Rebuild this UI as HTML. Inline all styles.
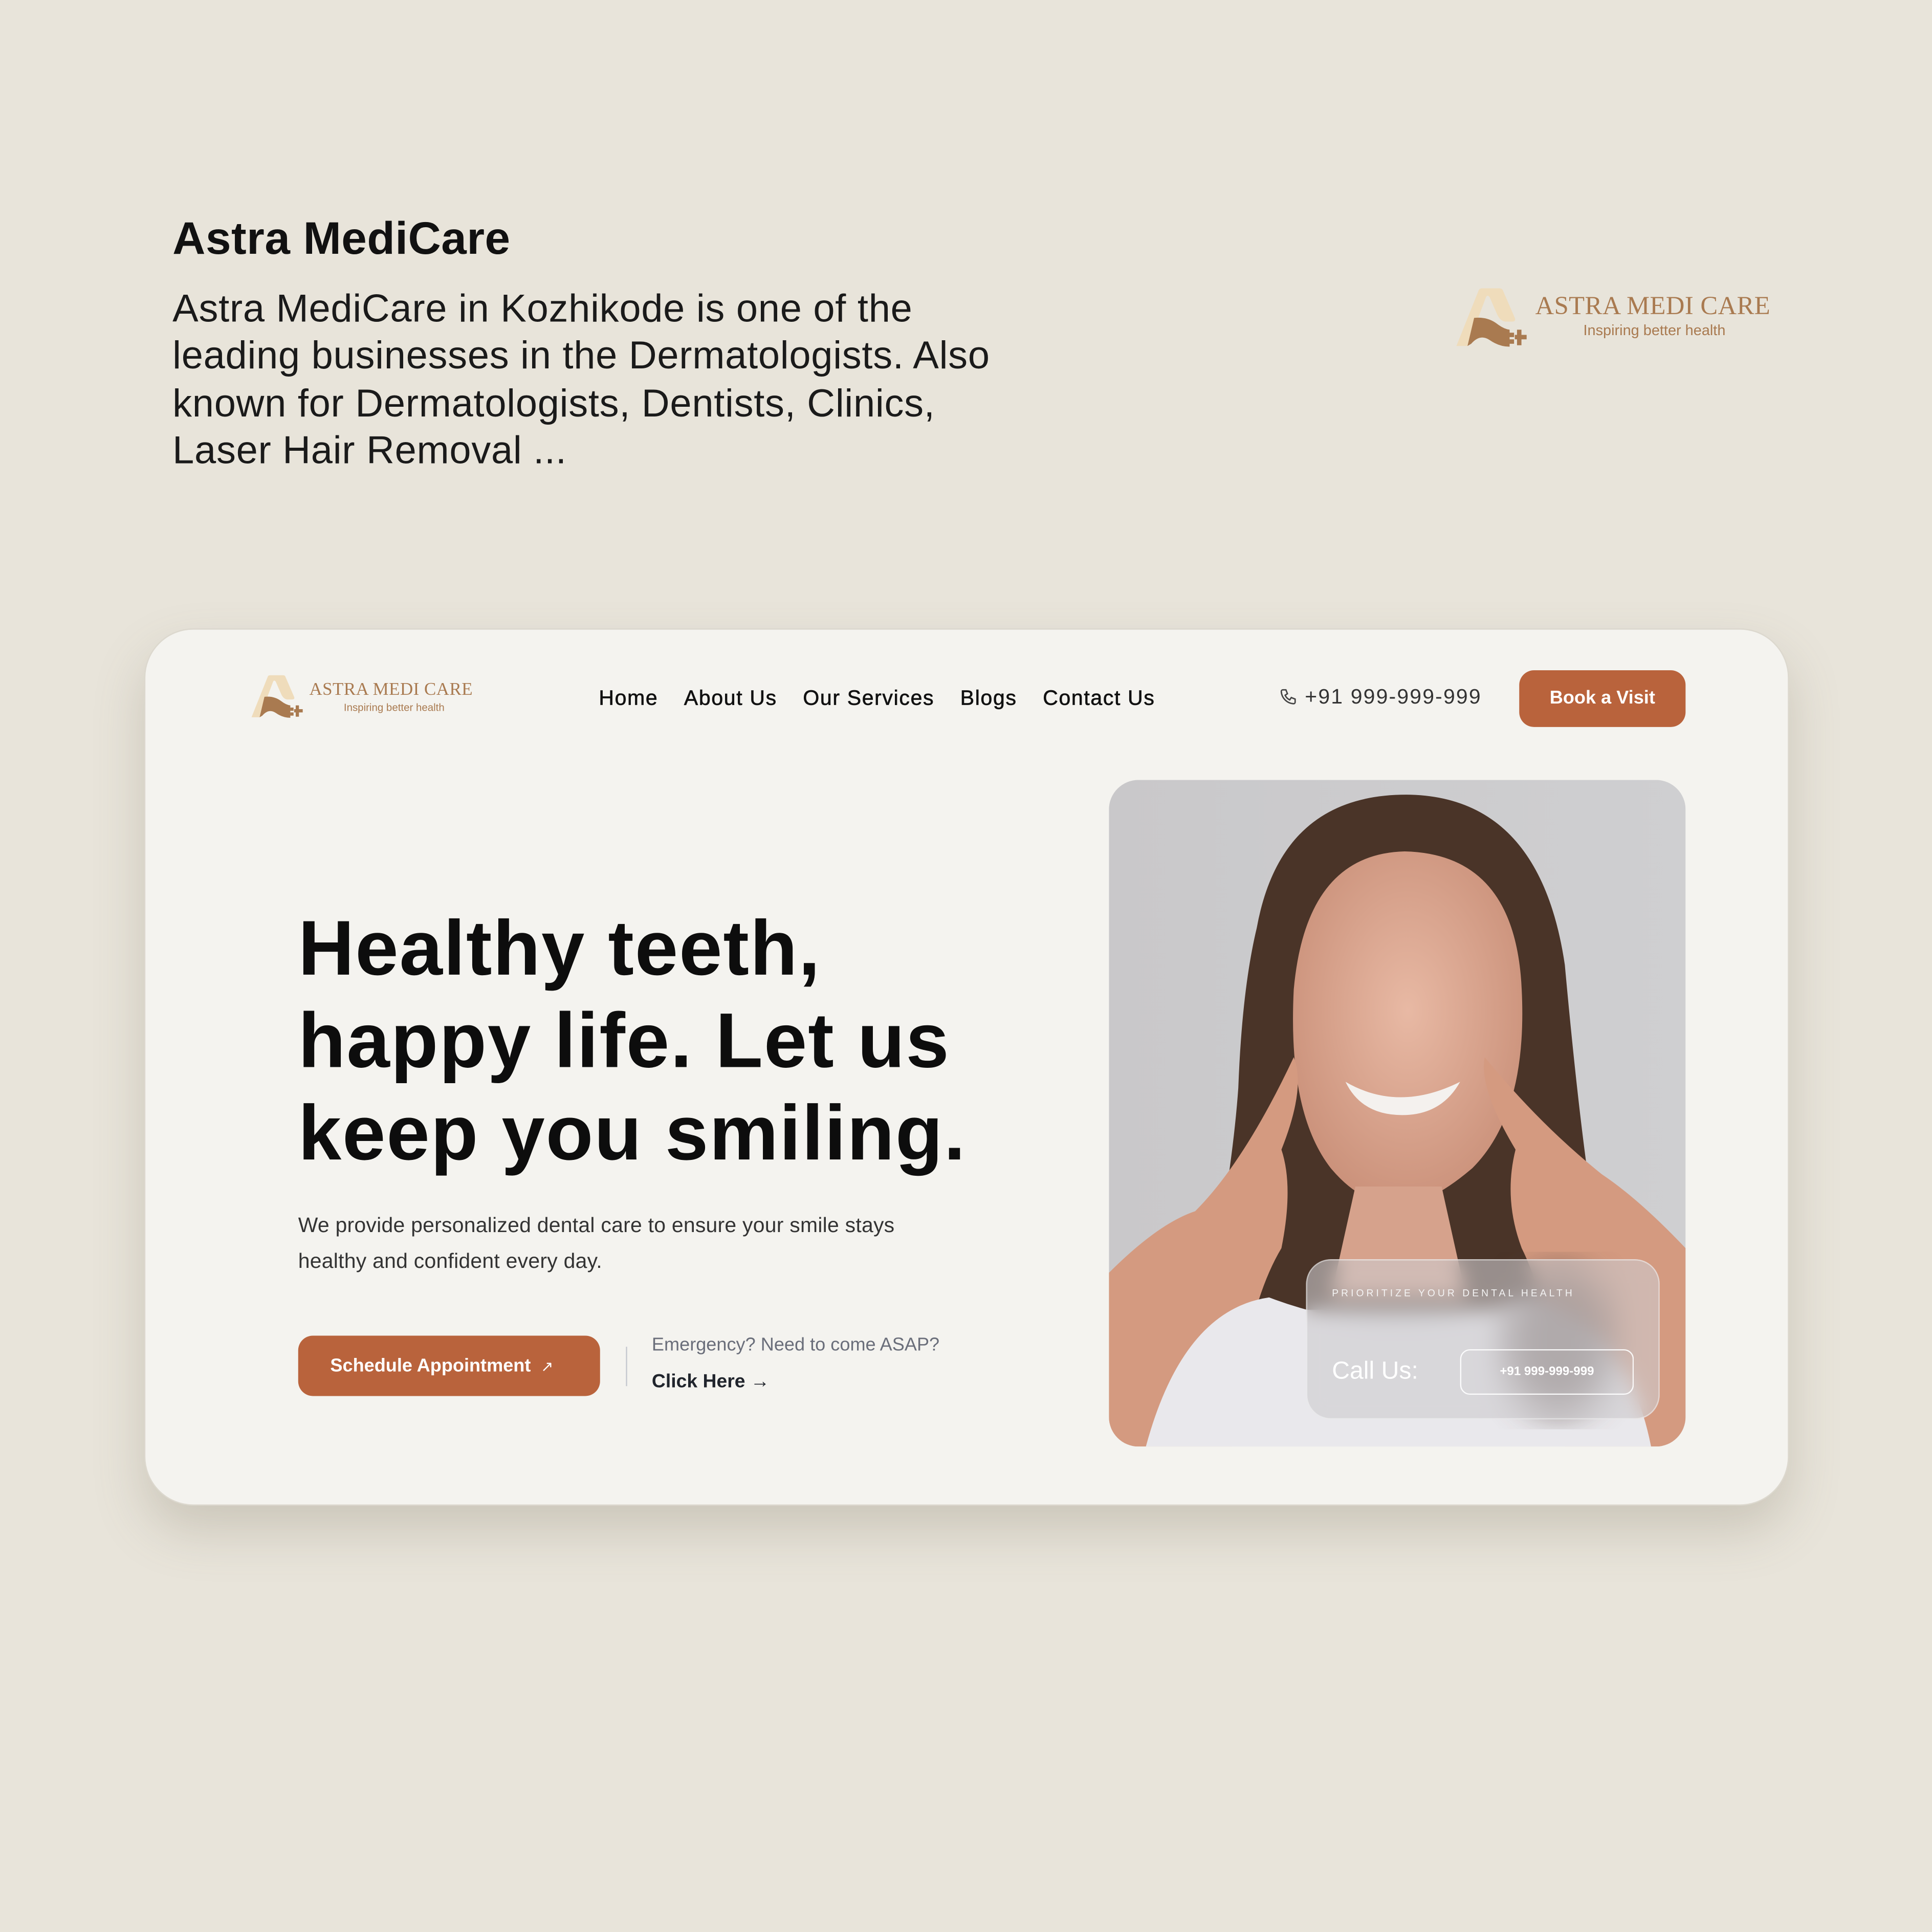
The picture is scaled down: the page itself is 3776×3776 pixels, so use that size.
<!DOCTYPE html>
<html><head><meta charset="utf-8">
<style>
*{margin:0;padding:0;box-sizing:border-box}
html,body{width:3776px;height:3776px;overflow:hidden;background:#e8e4da}
#s{position:absolute;left:0;top:0;width:1568px;height:1568px;transform:scale(2.408163);transform-origin:0 0;font-family:"Liberation Sans",sans-serif;color:#111}
.a{position:absolute}
.lt{font-family:"Liberation Serif",serif;color:#a97a50;letter-spacing:0.2px}
.nav span{margin-right:21px}
</style></head><body>
<div id="s">
<div class="a" style="left:140px;top:173px;font-size:37px;font-weight:bold;letter-spacing:0.2px">Astra MediCare</div>
<div class="a" style="left:140px;top:231px;font-size:31.5px;line-height:38.3px;width:700px;color:#1a1a1a;letter-spacing:0.3px">Astra MediCare in Kozhikode is one of the leading businesses in the Dermatologists. Also known for Dermatologists, Dentists, Clinics, Laser Hair Removal ...</div>

<svg class="a" style="left:1180px;top:234px" width="64" height="48" viewBox="0 0 100 80">
<path d="M0,78 L30,3 Q31,0 35,0 L58,0 Q62,0 63,3 L79,40 Q81,45 75,45 L66,45 Q59,44 55,35 L45,12 Q42,8 40,12 L22,60 L15,78 Z" fill="#efdcbb"/>
<path d="M24,40 Q42,38 55,48 Q64,55 72,56 L72,79 Q58,79 45,70 Q32,61 20,75 L15,78 Z" fill="#a97a50"/>
<rect x="72" y="60" width="6" height="6" fill="#a97a50"/><rect x="72" y="69" width="6" height="6" fill="#a97a50"/>
<path d="M82,56h6v7h7v6h-7v8h-6v-8h-3v-6h3z" fill="#a97a50"/>
</svg>
<div class="a lt" style="left:1246px;top:236px;font-size:21px">ASTRA MEDI CARE</div>
<div class="a" style="left:1285px;top:261px;font-size:12px;color:#a97a50">Inspiring better health</div>

<div class="a" style="left:117px;top:510px;width:1335px;height:712px;border-radius:40px;background:#f4f3ef;box-shadow:0 20px 40px rgba(120,110,90,0.25);border:1px solid #dcd8ce"></div>

<svg class="a" style="left:203px;top:548px" width="46" height="35" viewBox="0 0 100 80">
<path d="M0,78 L30,3 Q31,0 35,0 L58,0 Q62,0 63,3 L79,40 Q81,45 75,45 L66,45 Q59,44 55,35 L45,12 Q42,8 40,12 L22,60 L15,78 Z" fill="#efdcbb"/>
<path d="M24,40 Q42,38 55,48 Q64,55 72,56 L72,79 Q58,79 45,70 Q32,61 20,75 L15,78 Z" fill="#a97a50"/>
<rect x="72" y="60" width="6" height="6" fill="#a97a50"/><rect x="72" y="69" width="6" height="6" fill="#a97a50"/>
<path d="M82,56h6v7h7v6h-7v8h-6v-8h-3v-6h3z" fill="#a97a50"/>
</svg>
<div class="a lt" style="left:251px;top:552px;font-size:14.5px">ASTRA MEDI CARE</div>
<div class="a" style="left:279px;top:569px;font-size:8.5px;color:#a97a50">Inspiring better health</div>

<div class="a nav" style="left:486px;top:557px;font-size:17px;letter-spacing:0.7px;white-space:nowrap;-webkit-text-stroke:0.3px #111"><span>Home</span><span>About Us</span><span>Our Services</span><span>Blogs</span><span>Contact Us</span></div>
<svg class="a" style="left:1038px;top:558px" width="15" height="15" viewBox="0 0 24 24"><path d="M5 3h4l2 5-3 2a12 12 0 0 0 6 6l2-3 5 2v4a2 2 0 0 1-2 2A17 17 0 0 1 3 5a2 2 0 0 1 2-2z" fill="none" stroke="#444" stroke-width="1.8"/></svg>
<div class="a" style="left:1059px;top:556px;font-size:17px;color:#333;letter-spacing:0.9px">+91 999-999-999</div>
<div class="a" style="left:1233px;top:544px;width:135px;height:46px;border-radius:12px;background:#b9633c;color:#fff;font-size:15px;font-weight:bold;text-align:center;line-height:46px">Book a Visit</div>

<div class="a" style="left:242px;top:733px;font-size:63px;line-height:75px;font-weight:bold;letter-spacing:0.8px;color:#0d0d0d;white-space:nowrap">Healthy teeth,<br>happy life. Let us<br>keep you smiling.</div>
<div class="a" style="left:242px;top:980px;font-size:17px;line-height:29px;color:#333;width:535px;letter-spacing:0.1px">We provide personalized dental care to ensure your smile stays healthy and confident every day.</div>
<div class="a" style="left:242px;top:1084px;width:245px;height:49px;border-radius:12px;background:#b9633c;color:#fff;font-size:15px;font-weight:bold;line-height:49px;padding-left:26px">Schedule Appointment <span style="font-weight:normal;margin-left:4px;font-size:12px">↗</span></div>
<div class="a" style="left:508px;top:1093px;width:1px;height:32px;background:#c5c8cf"></div>
<div class="a" style="left:529px;top:1083px;font-size:15px;color:#6a6e7a">Emergency? Need to come ASAP?</div>
<div class="a" style="left:529px;top:1113px;font-size:15.5px;font-weight:bold;color:#20242c">Click Here →</div>

<svg class="a" style="left:900px;top:633px;border-radius:24px" width="468" height="541" viewBox="0 0 468 541">
<defs>
<linearGradient id="bg" x1="0" y1="0" x2="1" y2="0"><stop offset="0" stop-color="#c9c8ca"/><stop offset="1" stop-color="#cfcfd1"/></linearGradient>
<radialGradient id="sk" cx="0.5" cy="0.45" r="0.6"><stop offset="0" stop-color="#e8b9a4"/><stop offset="1" stop-color="#c98f78"/></radialGradient>
<filter id="bl"><feGaussianBlur stdDeviation="14"/></filter>
</defs>
<rect width="468" height="541" fill="url(#bg)"/>
<path d="M120,120 Q140,10 245,12 Q350,15 370,150 Q380,260 390,330 L400,420 L330,430 L150,430 L80,420 Q100,320 105,250 Q108,170 120,120Z" fill="#4a3428"/>
<path d="M150,170 Q160,60 240,58 Q330,60 335,170 Q340,270 295,315 Q260,345 235,345 Q205,345 180,315 Q145,270 150,170Z" fill="url(#sk)"/>
<path d="M200,330 L270,330 L290,420 L180,420Z" fill="#d6a28c"/>
<path d="M192,245 Q235,270 285,245 Q270,272 238,272 Q205,272 192,245Z" fill="#f4f1ee"/>
<path d="M0,400 Q40,360 70,350 Q110,310 150,225 Q160,250 140,300 Q150,330 140,380 Q110,430 100,541 L0,541Z" fill="#d49a80"/>
<path d="M468,380 Q430,340 400,320 Q350,280 305,225 Q300,250 330,300 Q320,340 335,380 Q360,430 370,541 L468,541Z" fill="#d49a80"/>
<path d="M30,541 Q60,430 130,420 Q235,460 340,420 Q420,440 440,541Z" fill="#e9e8ec"/>
<ellipse cx="365" cy="455" rx="45" ry="60" fill="#5a4a44" filter="url(#bl)" opacity="0.7"/>
</svg>
<div class="a" style="left:1060px;top:1022px;width:287px;height:130px;border-radius:20px;background:rgba(205,203,207,0.6);border:1px solid rgba(255,255,255,0.45);backdrop-filter:blur(8px)"></div>
<div class="a" style="left:1081px;top:1045px;font-size:8px;letter-spacing:2.1px;color:#f4f4f4">PRIORITIZE YOUR DENTAL HEALTH</div>
<div class="a" style="left:1081px;top:1102px;font-size:20px;color:#fff">Call Us:</div>
<div class="a" style="left:1185px;top:1095px;width:141px;height:37px;border-radius:8px;border:1.5px solid rgba(255,255,255,0.9);color:#fff;font-size:10px;font-weight:bold;text-align:center;line-height:35px">+91 999-999-999</div>
</div>
</body></html>
